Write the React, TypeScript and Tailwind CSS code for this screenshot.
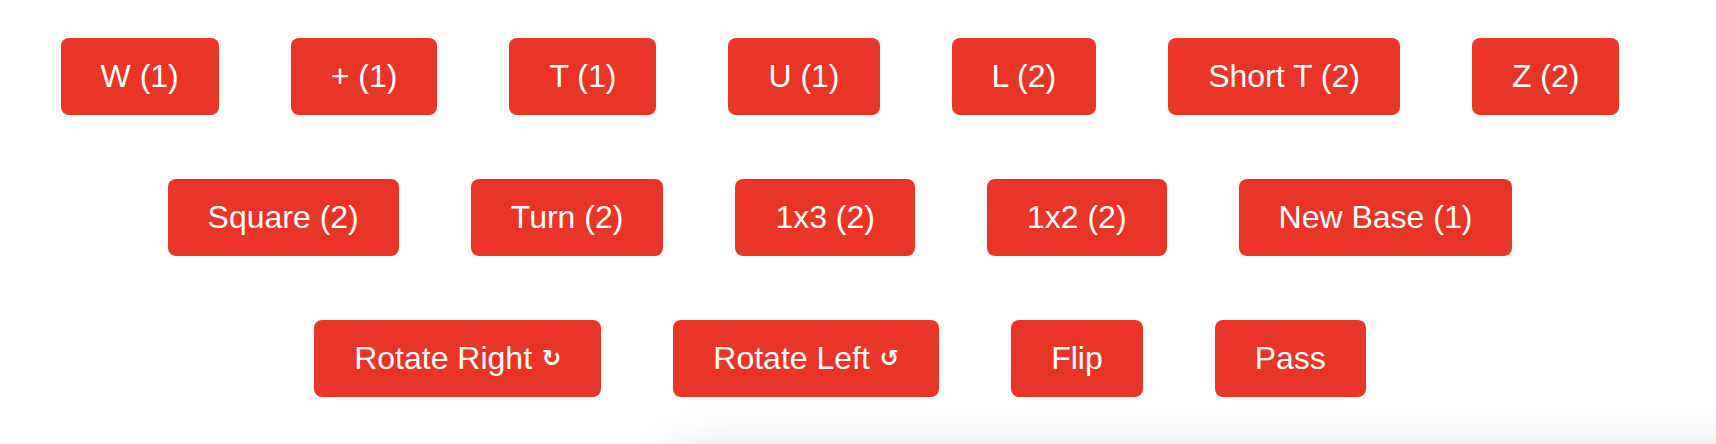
import React from 'react';

const rows: string[][] = [
  ['W (1)', '+ (1)', 'T (1)', 'U (1)', 'L (2)', 'Short T (2)', 'Z (2)'],
  ['Square (2)', 'Turn (2)', '1x3 (2)', '1x2 (2)', 'New Base (1)'],
];

const PieceButton = ({ children }: { children: React.ReactNode }) => (
  <button className="flex h-[77px] items-center rounded-lg bg-[#e9342a] px-10 text-[32px] leading-[37px] text-white">
    {children}
  </button>
);

const Arrow = ({ glyph }: { glyph: string }) => (
  <span className="ml-[10px] text-[23px] font-bold" style={{ fontFamily: '"DejaVu Sans", sans-serif' }}>
    {glyph}
  </span>
);

export default function App() {
  return (
    <div
      className="relative h-[444px] w-full overflow-hidden bg-white"
      style={{ fontFamily: '"Liberation Sans", Arial, sans-serif' }}
    >
      <div className="flex w-[1680px] flex-col gap-[64px] pt-[38px]">
        {rows.map((row, i) => (
          <div key={i} className="flex justify-center gap-[72px]">
            {row.map((label) => (
              <PieceButton key={label}>{label}</PieceButton>
            ))}
          </div>
        ))}
        <div className="flex justify-center gap-[72px]">
          <PieceButton>
            Rotate Right
            <Arrow glyph="↻" />
          </PieceButton>
          <PieceButton>
            Rotate Left
            <Arrow glyph="↺" />
          </PieceButton>
          <PieceButton>Flip</PieceButton>
          <PieceButton>Pass</PieceButton>
        </div>
      </div>
      {/* board panel below the fold, only its shadow shows */}
      <div className="ml-[670px] mt-[54px] h-[300px] w-[1200px] rounded-xl bg-white shadow-[0_0_50px_rgba(0,0,0,0.14)]" />
    </div>
  );
}
